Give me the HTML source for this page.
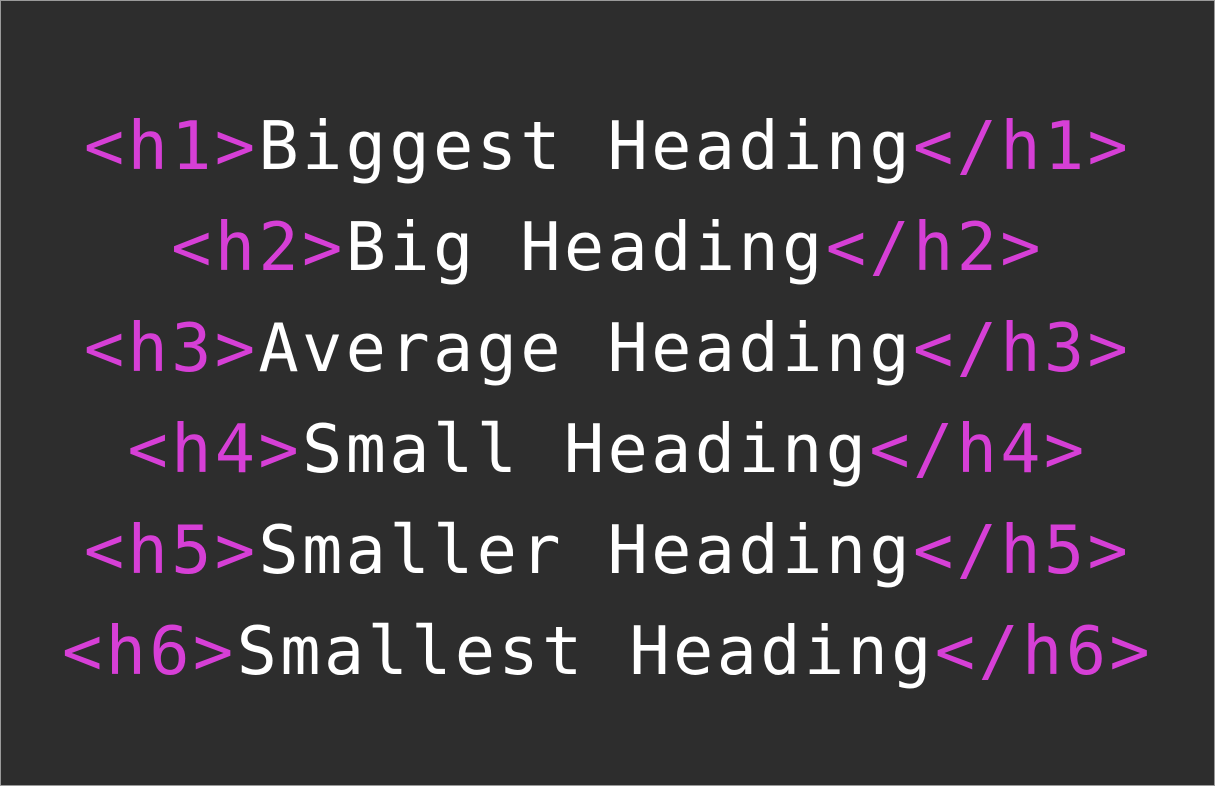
<!DOCTYPE html>
<html><head><meta charset="utf-8"><style>
html,body{margin:0;padding:0;}
body{width:1215px;height:786px;background:#2d2d2d;overflow:hidden;position:relative;}
.frame{position:absolute;left:0;top:0;width:1213px;height:784px;border:1px solid #9a9a9a;}
.wrap{position:absolute;left:0;top:96px;width:1215px;text-align:center;font-family:"DejaVu Sans Mono","Liberation Mono",monospace;font-size:67px;letter-spacing:3.3px;line-height:101px;color:#fff;white-space:pre;}
.t{color:#d63fd6;}
</style></head><body><div class="frame"></div>
<div class="wrap"><div><span class="t">&lt;h1&gt;</span>Biggest Heading<span class="t">&lt;/h1&gt;</span></div><div><span class="t">&lt;h2&gt;</span>Big Heading<span class="t">&lt;/h2&gt;</span></div><div><span class="t">&lt;h3&gt;</span>Average Heading<span class="t">&lt;/h3&gt;</span></div><div><span class="t">&lt;h4&gt;</span>Small Heading<span class="t">&lt;/h4&gt;</span></div><div><span class="t">&lt;h5&gt;</span>Smaller Heading<span class="t">&lt;/h5&gt;</span></div><div><span class="t">&lt;h6&gt;</span>Smallest Heading<span class="t">&lt;/h6&gt;</span></div></div>
</body></html>
